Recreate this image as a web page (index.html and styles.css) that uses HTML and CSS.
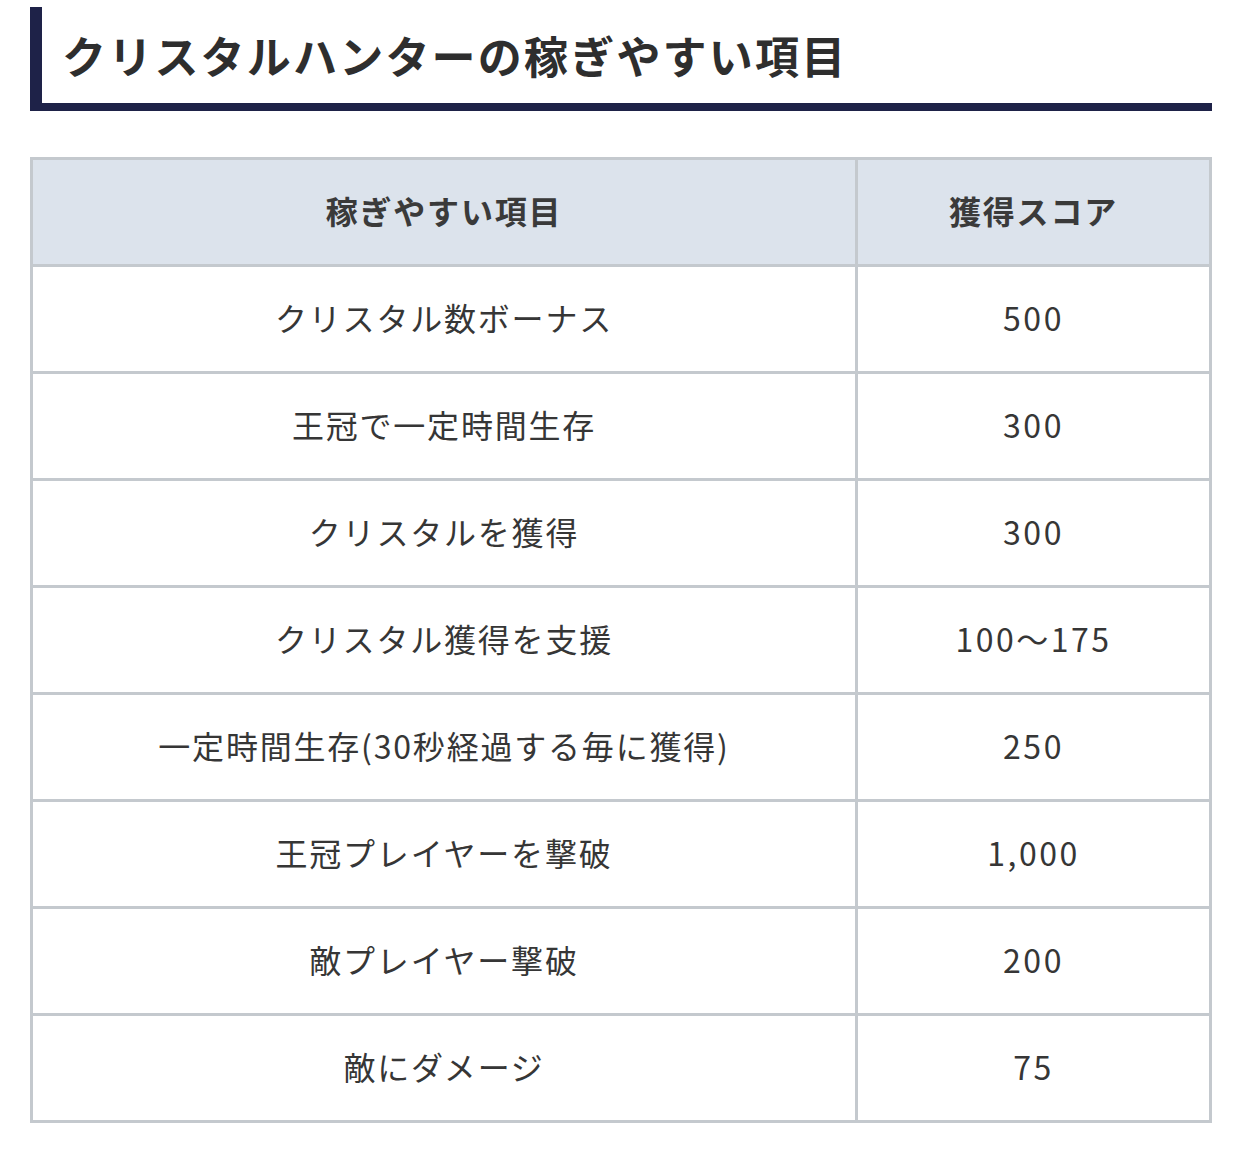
FILE: index.html
```html
<!DOCTYPE html>
<html lang="ja">
<head>
<meta charset="utf-8">
<link rel="stylesheet" href="styles.css">
</head>
<body>
<h2 class="heading">クリスタルハンターの稼ぎやすい項目</h2>
<table class="score-table">
  <thead>
    <tr><th class="col-item">稼ぎやすい項目</th><th class="col-score">獲得スコア</th></tr>
  </thead>
  <tbody>
    <tr><td>クリスタル数ボーナス</td><td class="num">500</td></tr>
    <tr><td>王冠で一定時間生存</td><td class="num">300</td></tr>
    <tr><td>クリスタルを獲得</td><td class="num">300</td></tr>
    <tr><td>クリスタル獲得を支援</td><td class="num">100〜175</td></tr>
    <tr><td>一定時間生存(30秒経過する毎に獲得)</td><td class="num">250</td></tr>
    <tr><td>王冠プレイヤーを撃破</td><td class="num">1,000</td></tr>
    <tr><td>敵プレイヤー撃破</td><td class="num">200</td></tr>
    <tr><td>敵にダメージ</td><td class="num">75</td></tr>
  </tbody>
</table>
</body>
</html>
```
FILE: styles.css
```css
html, body {
  margin: 0;
  padding: 0;
  background: #ffffff;
}
body {
  font-family: "Noto Sans CJK JP", "Noto Sans", sans-serif;
  color: #333333;
  padding-top: 7px;
}
.heading {
  box-sizing: border-box;
  margin: 0 0 46px 30px;
  width: 1182px;
  height: 104px;
  border-left: 12px solid #1e2248;
  border-bottom: 8px solid #1e2248;
  padding-left: 20px;
  display: flex;
  align-items: center;
  font-size: 44px;
  font-weight: 700;
  letter-spacing: 2.2px;
  color: #2e2e2e;
  line-height: 1;
}
.score-table {
  margin-left: 30px;
  width: 1182px;
  border-collapse: collapse;
  border: 3px solid #c4c9ce;
  table-layout: fixed;
}
.score-table th,
.score-table td {
  border: 3px solid #c4c9ce;
  height: 100px;
  padding: 0 0 4px 0;
  text-align: center;
  vertical-align: middle;
  font-size: 32px;
  letter-spacing: 1.8px;
  line-height: 1;
  color: #363636;
}
.score-table th {
  background: #dce3ec;
  font-weight: 700;
  color: #3a3a3a;
}
.score-table td {
  font-weight: 400;
}
.score-table td.num {
  letter-spacing: 2.5px;
}
.col-item {
  width: 822px;
}
```
